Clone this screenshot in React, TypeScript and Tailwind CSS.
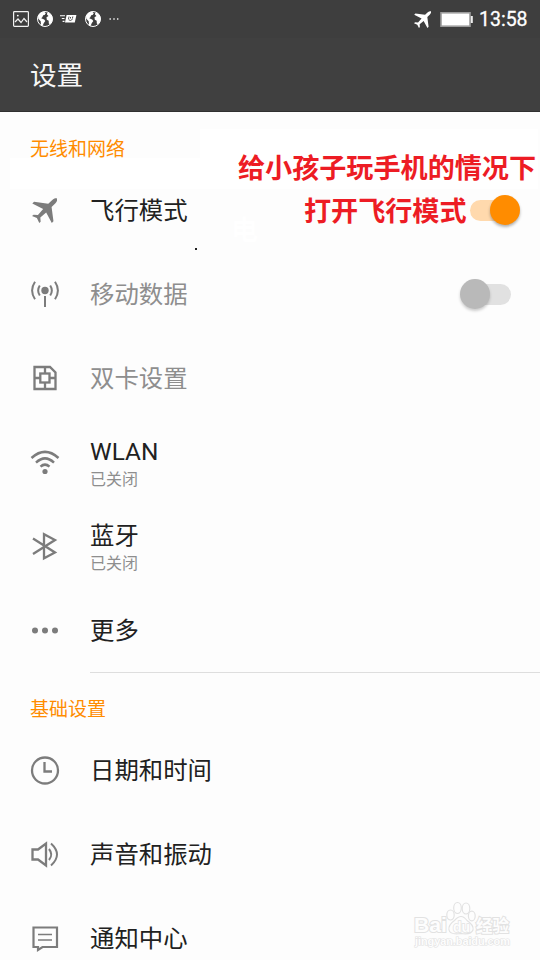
import React from 'react';

const ORANGE = '#ff8c00';

function Plane({ size, className }: { size: number; className?: string }) {
  return (
    <svg width={size} height={size} viewBox="0 0 24 24" fill="currentColor" className={className}>
      <path d="M24 .5C23-.2 21 .3 19.5 1.8L15.6 5.4L2 3.6L.3 5.2L10.7 10.6L5.7 16.3L1.5 16L0 17.3L4.7 19.3L7 24L8.3 22.7L8 18.7L13.6 14L19 24L20.6 22.4L18.8 8.6L22.5 5C24 3.3 24.6 1.6 24 .5Z" />
    </svg>
  );
}

function Globe() {
  return (
    <svg width="16" height="16" viewBox="0 0 16 16">
      <circle cx="8" cy="8" r="7.5" fill="none" stroke="#fff" />
      <path fill="#fff" d="M1 5L3 2L7 .6L8.8 2.3L7.6 4L6.2 4.3L5.3 6.2L4.2 7.2L7.2 8.4L8.3 10L6.7 12.2L5.6 15L4 14L3.7 10.3L1.3 7.8ZM10.2 1.6L13.2 2.6L15.4 6L15.3 10L13.2 13.4L11.8 12.5L11.7 9.8L9.8 8.8L9.5 6.2L11.5 5L10 3.6Z" />
    </svg>
  );
}

function StatusBar() {
  return (
    <div className="flex h-[38px] items-center bg-[#3e3e3e] pl-[13px] pr-[12px] text-white">
      <svg width="16" height="16" viewBox="0 0 16 16" fill="none" stroke="#f2f2f2" strokeWidth="1.2">
        <rect x=".6" y=".6" width="14.8" height="14.8" rx=".8" />
        <path d="M2 11L5 8L8 11.5L11 7.5L14 11" />
        <circle cx="4.8" cy="4.6" r=".9" fill="#fff" stroke="none" />
      </svg>
      <div className="ml-2"><Globe /></div>
      <svg width="17" height="10" viewBox="0 0 17 10" className="ml-[7px]">
        <path d="M0 1.7H5M1.8 4.5H4.5M2.6 7.4H4.5" stroke="#fff" strokeWidth="1.1" />
        <path d="M6.6 1H16.4L14.8 8.6H5Z" fill="#fff" />
        <path d="M9 2.5L8.5 5M12.8 2.5L12.4 4.5M8.5 5.7Q10.5 7.5 12.6 5.2M10.5 3V4.5" stroke="#3e3e3e" strokeWidth=".9" fill="none" />
      </svg>
      <div className="ml-2"><Globe /></div>
      <svg width="10" height="2" viewBox="0 0 10 2" className="ml-2" fill="#fff">
        <rect x=".5" width="1.4" height="1.4" y=".3" /><rect x="4.3" width="1.4" height="1.4" y=".3" /><rect x="8" width="1.4" height="1.4" y=".3" />
      </svg>
      <div className="ml-auto flex items-center">
        <Plane size={17} />
        <svg width="33" height="15" viewBox="0 0 33 15" className="ml-[9px]">
          <rect x="1" y=".8" width="29" height="13.4" fill="#fff" stroke="#9b9b9b" strokeWidth="1.6" />
          <rect x="30.8" y="4" width="2" height="7" fill="#eee" />
        </svg>
        <span className="ml-[6px] w-[49px] whitespace-nowrap pt-[2px] font-[Roboto] text-[19.5px] leading-none [-webkit-text-stroke:0.3px_white]">13:58</span>
      </div>
    </div>
  );
}

function SimIcon() {
  return (
    <svg width="30" height="30" viewBox="0 0 30 30" fill="none" stroke="currentColor" strokeWidth="2.3">
      <path d="M4.5 4H20L25.5 9.5V26H4.5Z" />
      <rect x="10.3" y="10.5" width="9.2" height="9" />
      <path d="M4.5 15H10.3M19.5 15H25.5M15 4V10.5M15 19.5V26" />
    </svg>
  );
}

function SignalIcon() {
  return (
    <svg width="30" height="30" viewBox="0 0 30 30" fill="none" stroke="currentColor" strokeWidth="2">
      <circle cx="15" cy="11.5" r="3.7" fill="currentColor" stroke="none" />
      <path d="M15 17V28" />
      <path d="M9.8 6.5Q6.5 11.5 9.8 16.5M20.2 6.5Q23.5 11.5 20.2 16.5M5 2.8Q-.8 11.5 5 20.2M25 2.8Q30.8 11.5 25 20.2" />
    </svg>
  );
}

function WifiIcon() {
  return (
    <svg width="30" height="30" viewBox="0 0 30 30" fill="none" stroke="currentColor" strokeWidth="2.5">
      <path d="M1.5 11Q15-1.2 28.5 11M6 15.6Q15 7.2 24 15.6M10.5 19.6Q15 15.6 19.5 19.6" />
      <circle cx="15" cy="24.5" r="2.6" fill="currentColor" stroke="none" />
    </svg>
  );
}

function BluetoothIcon() {
  return (
    <svg width="30" height="30" viewBox="0 0 30 30" fill="none" stroke="currentColor" strokeWidth="2.3">
      <path d="M3 7.5L25 21.5L14 27.3V3.2L25 9L3 23" />
    </svg>
  );
}

function MoreIcon() {
  return (
    <svg width="30" height="30" viewBox="0 0 30 30" fill="currentColor">
      <circle cx="5" cy="15.5" r="3" /><circle cx="15" cy="15.5" r="3" /><circle cx="25" cy="15.5" r="3" />
    </svg>
  );
}

function ClockIcon() {
  return (
    <svg width="30" height="30" viewBox="0 0 30 30" fill="none" stroke="currentColor" strokeWidth="2.3">
      <circle cx="15" cy="15.5" r="13" />
      <path d="M14.5 7V16.5H22" />
    </svg>
  );
}

function SoundIcon() {
  return (
    <svg width="30" height="30" viewBox="0 0 30 30" fill="none" stroke="currentColor" strokeWidth="2">
      <path d="M2.5 10.5H8L16 4.5V26.5L8 20.5H2.5Z" strokeWidth="2.3" />
      <path d="M19 10Q23.5 15.5 19 21M21 4.5Q33 15.5 21 26.5" />
    </svg>
  );
}

function NoticeIcon() {
  return (
    <svg width="30" height="30" viewBox="0 0 30 30" fill="none" stroke="currentColor" strokeWidth="2.2">
      <path d="M3.5 4.5H27V24H12.5L8 27V24H3.5Z" />
      <path d="M8 11.5H22M8 17H22" strokeWidth="1.7" />
    </svg>
  );
}

function SectionTitle({ children }: { children: React.ReactNode }) {
  return (
    <h2 className="h-14 pl-[30px] pt-[25px] text-[19px] leading-[26px]" style={{ color: ORANGE }}>{children}</h2>
  );
}

type RowProps = {
  icon: React.ReactNode;
  title: string;
  sub?: string;
  disabled?: boolean;
  children?: React.ReactNode;
};

function Row({ icon, title, sub, disabled, children }: RowProps) {
  return (
    <div className="flex h-[84px] items-center pl-[30px]">
      <div className="w-[60px] shrink-0 text-[#7c7c7c]">{icon}</div>
      <div className={`${sub ? 'pt-[5px]' : 'pt-[2px]'} ${disabled ? 'text-[#8e8e8e]' : 'text-[#212121]'}`}>
        <div className="whitespace-nowrap text-[24.4px] leading-[30px]">{title}</div>
        {sub && <div className="text-[16px] leading-[25px] text-[#8e8e8e]">{sub}</div>}
      </div>
      {children}
    </div>
  );
}

function Watermark() {
  return (
    <div className="absolute left-[413px] top-[901px] h-[50px] w-[100px]">
      <svg width="100" height="50" viewBox="0 0 100 50" fill="#fdfdfd" stroke="#e2e2e2" strokeWidth="1.2">
        <g strokeWidth="2" style={{ paintOrder: 'stroke' }}>
          <text x="1" y="31" fontSize="21" fontWeight="bold" fontFamily="Liberation Sans, sans-serif" textLength="33" lengthAdjust="spacingAndGlyphs">Bai</text>
          <text x="63" y="31" fontSize="16.5" fontWeight="bold" fontFamily="Noto Sans CJK SC, sans-serif">经验</text>
        </g>
        <ellipse cx="37.5" cy="14" rx="3.7" ry="5" />
        <ellipse cx="44.5" cy="7" rx="3.8" ry="5.5" />
        <ellipse cx="53" cy="7.5" rx="3.8" ry="5.5" />
        <ellipse cx="58.8" cy="15" rx="3.4" ry="4.8" />
        <path d="M48 15.5Q51 15.5 54 19.5Q61 24 60 29Q58 34 48 32.5Q37 34 36 29Q35 24 41.5 19.5Q45 15.5 48 15.5Z" />
        <text x="40" y="31" fontSize="14" fontWeight="bold" fontFamily="Liberation Sans, sans-serif" strokeWidth="1.4" style={{ paintOrder: 'stroke' }}>du</text>
        <text x="2" y="44" fontSize="11" fontWeight="bold" fontFamily="Liberation Sans, sans-serif" strokeWidth="1.2" textLength="95" style={{ paintOrder: 'stroke' }}>jingyan.baidu.com</text>
      </svg>
    </div>
  );
}

export default function App() {
  return (
    <div className="relative h-[960px] w-[540px] overflow-hidden bg-[#fdfdfd] font-['Roboto','Noto_Sans_CJK_SC',sans-serif]">
      <StatusBar />
      <header className="flex h-[74px] items-center border-b border-[#303030] bg-[#404040] pl-[30px] pt-[2px] text-[26.6px] text-[#f7f7f7]">设置</header>

      {/* erased patches behind the note */}
      <div className="absolute left-[200px] top-[129px] h-[60px] w-[338px] bg-white" />
      <div className="absolute left-[10px] top-[158px] h-[31px] w-[190px] bg-white" />
      <div className="absolute left-[231px] top-[213px] text-[27px] font-bold leading-[36px] text-white">电</div>
      <div className="absolute left-[195px] top-[248px] h-[2px] w-[2px] bg-[#222]" />

      <main className="relative">
        <SectionTitle>无线和网络</SectionTitle>
        <Row icon={<Plane size={25} className="ml-[2px]" />} title="飞行模式">
          <div className="ml-auto mr-[20px] flex h-[30px] w-[50px] items-center justify-end rounded-full">
            <div className="h-[21px] w-[36px] rounded-l-full bg-[#ffd9ad]" />
            <div className="-ml-[15px] h-[30px] w-[30px] shrink-0 rounded-full bg-[#ff8c00] shadow-[0_2px_3px_rgba(0,0,0,0.3)]" />
          </div>
        </Row>
        <Row icon={<SignalIcon />} title="移动数据" disabled>
          <div className="ml-auto mr-[29px] flex items-center">
            <div className="z-10 h-[30px] w-[30px] shrink-0 rounded-full bg-[#b9b9b9] shadow-[0_2px_3px_rgba(0,0,0,0.2)]" />
            <div className="-ml-[15px] h-[21px] w-[36px] rounded-r-full bg-[#e1e1e1]" />
          </div>
        </Row>
        <Row icon={<SimIcon />} title="双卡设置" disabled />
        <Row icon={<WifiIcon />} title="WLAN" sub="已关闭" />
        <Row icon={<BluetoothIcon />} title="蓝牙" sub="已关闭" />
        <Row icon={<MoreIcon />} title="更多" />
        <div className="ml-[90px] -mb-px h-px bg-[#dedede]" />
        <SectionTitle>基础设置</SectionTitle>
        <Row icon={<ClockIcon />} title="日期和时间" />
        <Row icon={<SoundIcon />} title="声音和振动" />
        <Row icon={<NoticeIcon />} title="通知中心" />
      </main>

      {/* red note */}
      <div className="absolute left-[238px] top-[148px] whitespace-nowrap text-[27.1px] font-bold leading-[43px] text-[#ed1c24]">
        <div>给小孩子玩手机的情况下</div>
        <div className="ml-[66px]">打开飞行模式</div>
      </div>
      <Watermark />
    </div>
  );
}
